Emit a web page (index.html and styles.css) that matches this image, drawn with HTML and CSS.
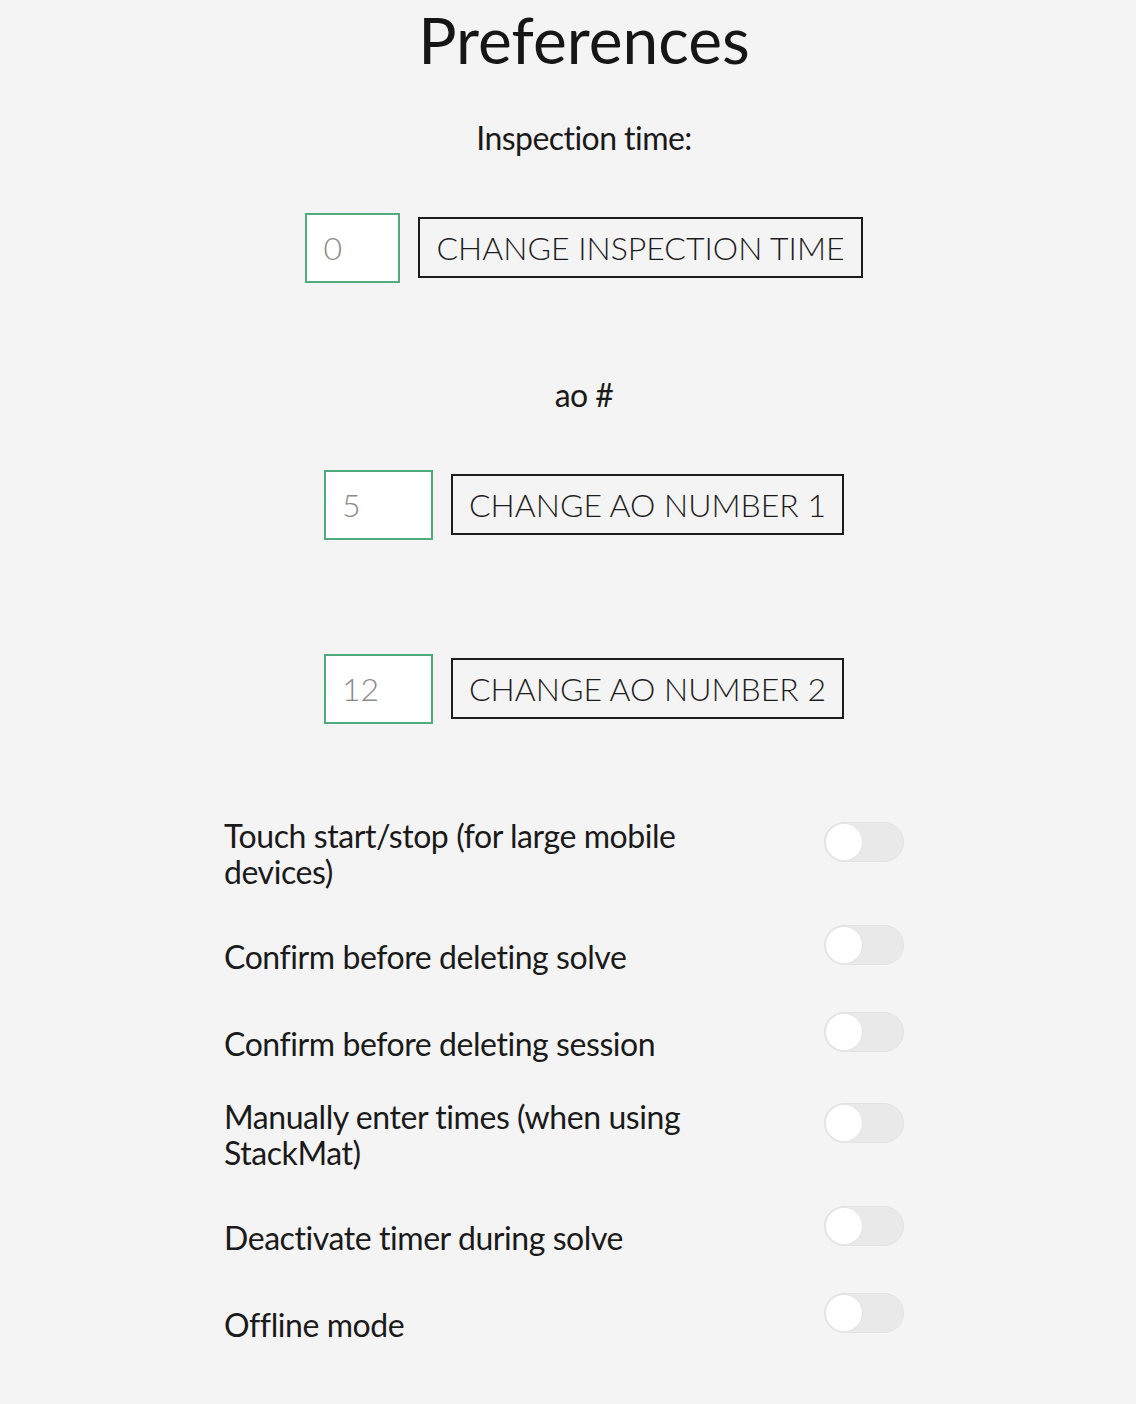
FILE: index.html
```html
<!DOCTYPE html>
<html lang="en">
<head>
<meta charset="utf-8">
<title>Preferences</title>
<link rel="stylesheet" href="styles.css">
</head>
<body>
<main class="page">
  <section class="top">
    <h1 class="title">Preferences</h1>
    <p class="caption caption--inspection">Inspection time:</p>
    <div class="field-row field-row--inspection">
      <input class="num-input num-input--narrow" type="text" placeholder="0">
      <button class="outline-btn" type="button">CHANGE INSPECTION TIME</button>
    </div>
    <p class="caption caption--ao">ao #</p>
    <div class="field-row field-row--ao1">
      <input class="num-input num-input--wide" type="text" placeholder="5">
      <button class="outline-btn" type="button">CHANGE AO NUMBER 1</button>
    </div>
    <div class="field-row field-row--ao2">
      <input class="num-input num-input--wide" type="text" placeholder="12">
      <button class="outline-btn" type="button">CHANGE AO NUMBER 2</button>
    </div>
  </section>

  <section class="settings">
    <div class="setting setting--wrap">
      <span class="setting-label">Touch start/stop (for large mobile devices)</span>
      <span class="switch"><span class="knob"></span></span>
    </div>
    <div class="setting">
      <span class="setting-label">Confirm before deleting solve</span>
      <span class="switch"><span class="knob"></span></span>
    </div>
    <div class="setting">
      <span class="setting-label">Confirm before deleting session</span>
      <span class="switch"><span class="knob"></span></span>
    </div>
    <div class="setting setting--wrap">
      <span class="setting-label">Manually enter times (when using StackMat)</span>
      <span class="switch"><span class="knob"></span></span>
    </div>
    <div class="setting">
      <span class="setting-label">Deactivate timer during solve</span>
      <span class="switch"><span class="knob"></span></span>
    </div>
    <div class="setting">
      <span class="setting-label">Offline mode</span>
      <span class="switch"><span class="knob"></span></span>
    </div>
  </section>
</main>
</body>
</html>
```
FILE: styles.css
```css
* { box-sizing: border-box; }

html, body {
  margin: 0;
  padding: 0;
  background: #f4f4f4;
}

body {
  font-family: Lato, "Open Sans", "Liberation Sans", sans-serif;
  color: #1a1a1a;
}

.page {
  min-height: 1404px;
}

.top {
  padding-left: 32px;
  display: flex;
  flex-direction: column;
  align-items: center;
}

.title {
  margin: 0;
  padding-top: 2px;
  font-size: 64px;
  font-weight: 400;
  line-height: 1.2;
  color: #161616;
}

.caption {
  margin: 0;
  font-size: 32px;
  line-height: 36px;
  font-weight: 400;
  letter-spacing: -0.55px;
}

.caption--inspection { margin-top: 41px; }
.caption--ao { margin-top: 94px; }

.field-row {
  display: flex;
  align-items: baseline;
  gap: 18px;
}

.field-row--inspection { margin-top: 57px; }
.field-row--ao1 { margin-top: 57px; }
.field-row--ao2 { margin-top: 114px; }

.num-input {
  height: 70px;
  border: 2px solid #4eab7b;
  background: #ffffff;
  padding: 0 16px;
  font-family: Lato, sans-serif;
  font-weight: 300;
  font-size: 32px;
  color: #333;
  outline: none;
}

.num-input::placeholder { color: #8a8a8a; }

.num-input--narrow { width: 95px; }
.num-input--wide { width: 109px; }

.outline-btn {
  border: 2px solid #1c1c1c;
  background: transparent;
  padding: 11px 16px 10px;
  font-family: Lato, sans-serif;
  font-weight: 300;
  font-size: 32px;
  line-height: 36px;
  color: #1c1c1c;
  cursor: pointer;
}

.settings {
  width: 688px;
  margin: 106px auto 0;
  padding-right: 8px;
}

.setting {
  display: flex;
  align-items: center;
  justify-content: space-between;
  margin-bottom: 47px;
}

.setting--wrap { margin-top: -12px; }

.setting-label {
  width: 500px;
  font-size: 32px;
  line-height: 36px;
  letter-spacing: -0.43px;
  color: #1a1a1a;
}

.switch {
  flex: 0 0 auto;
  width: 80px;
  height: 40px;
  margin: -12px 0 12px;
  border-radius: 20px;
  background: #e9e9e9;
  border: 1px solid #e3e3e3;
  position: relative;
}

.knob {
  position: absolute;
  left: 1px;
  top: 1px;
  width: 36px;
  height: 36px;
  border-radius: 50%;
  background: #ffffff;
  box-shadow: 0 0 0 1px #e4e4e4;
}
```
